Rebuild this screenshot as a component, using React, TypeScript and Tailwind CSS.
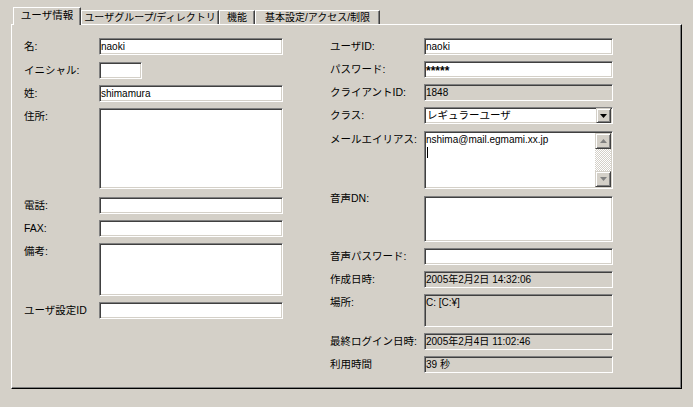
import clsx from 'clsx'
import { FC, ReactNode } from 'react'

// classic 3D borders
const sunken =
  'border border-t-[#808080] border-l-[#808080] border-b-white border-r-white shadow-[inset_1px_1px_0_#404040,inset_-1px_-1px_0_#d4d0c8]'
const raised =
  'border border-t-[#d4d0c8] border-l-[#d4d0c8] border-b-[#404040] border-r-[#404040] shadow-[inset_1px_1px_0_#ffffff,inset_-1px_-1px_0_#808080]'

interface RowProps {
  label: string
  labelClass: string
  className?: string
  labelOffset?: string
  children: ReactNode
}

const Row: FC<RowProps> = ({ label, labelClass, className, labelOffset, children }) => (
  <div className={clsx('flex', className)}>
    <div className={clsx('flex h-[17px] shrink-0 items-center whitespace-nowrap', labelClass, labelOffset)}>
      {label}
    </div>
    {children}
  </div>
)

interface BoxProps {
  className: string
  value?: string
  readOnly?: boolean
  multi?: boolean
}

const Box: FC<BoxProps> = ({ className, value, readOnly, multi }) => (
  <div
    className={clsx(
      sunken,
      className,
      'pl-px text-[10px] leading-[13px] font-["Liberation_Sans","Noto_Sans_CJK_JP",sans-serif]',
      readOnly ? 'bg-[#d4d0c8]' : 'bg-white',
      multi ? 'pt-px' : 'flex items-center'
    )}
  >
    {value}
  </div>
)

const Arrow: FC<{ dir: 'up' | 'down'; color: string }> = ({ dir, color }) => (
  <svg width="7" height="4" viewBox="0 0 7 4">
    {dir === 'up' ? <path d="M3.5 0 L7 4 L0 4 Z" fill={color} /> : <path d="M0 0 L7 0 L3.5 4 Z" fill={color} />}
  </svg>
)

const tabs = [
  { label: 'ユーザグループ/ディレクトリ', w: 'w-[138px]' },
  { label: '機能', w: 'w-[36px]' },
  { label: '基本設定/アクセス/制限', w: 'w-[125px]' },
]

export default function App() {
  const leftLabel = 'w-[75px]'
  const rightLabel = 'w-[94px]'

  return (
    <div className='h-[407px] w-[693px] overflow-hidden bg-[#d4d0c8] pt-[7px] pl-[11px] font-["Liberation_Sans","Noto_Sans_CJK_JP",sans-serif] text-[10.5px] text-black'>
      {/* tab strip */}
      <div className="flex h-[17px] items-end pl-[2px]">
        <div className="relative z-10 -mb-px flex h-[18px] w-[68px] items-center justify-center border-t border-l border-r border-t-white border-l-white border-r-[#404040] bg-[#d4d0c8] pb-[2px] shadow-[inset_-1px_0_0_#808080]">
          ユーザ情報
        </div>
        {tabs.map((t) => (
          <div
            key={t.label}
            className={clsx(
              t.w,
              'flex h-[14px] items-center justify-center whitespace-nowrap border-t border-l border-r border-t-white border-l-white border-r-[#404040] text-[10px] shadow-[inset_-1px_0_0_#808080]'
            )}
          >
            {t.label}
          </div>
        ))}
      </div>

      {/* panel */}
      <div className="flex h-[365px] w-[671px] gap-[47px] border border-t-white border-l-white border-r-black border-b-black pt-[13px] pl-[12px] shadow-[inset_-1px_-1px_0_#808080]">
        {/* left column */}
        <div className="flex w-[259px] flex-col">
          <Row label="名:" labelClass={leftLabel}>
            <Box className="h-[17px] w-[184px]" value="naoki" />
          </Row>
          <Row label="イニシャル:" labelClass={leftLabel} className="mt-[7px]">
            <Box className="h-[17px] w-[43px]" />
          </Row>
          <Row label="姓:" labelClass={leftLabel} className="mt-[6px]">
            <Box className="h-[17px] w-[184px]" value="shimamura" />
          </Row>
          <Row label="住所:" labelClass={leftLabel} className="mt-[6px]">
            <Box className="h-[81px] w-[184px]" multi />
          </Row>
          <Row label="電話:" labelClass={leftLabel} className="mt-[8px]">
            <Box className="h-[17px] w-[184px]" />
          </Row>
          <Row label="FAX:" labelClass={leftLabel} className="mt-[6px]">
            <Box className="h-[17px] w-[184px]" />
          </Row>
          <Row label="備考:" labelClass={leftLabel} className="mt-[6px]">
            <Box className="h-[53px] w-[184px]" multi />
          </Row>
          <Row label="ユーザ設定ID" labelClass={leftLabel} className="mt-[6px]">
            <Box className="h-[17px] w-[184px]" />
          </Row>
        </div>

        {/* right column */}
        <div className="flex w-[283px] flex-col">
          <Row label="ユーザID:" labelClass={rightLabel}>
            <Box className="h-[17px] w-[189px]" value="naoki" />
          </Row>
          <Row label="パスワード:" labelClass={rightLabel} className="mt-[6px]">
            <div className={clsx(sunken, 'flex h-[17px] w-[189px] items-center bg-white pl-px pt-[3px] text-[12px] font-bold')}>
              *****
            </div>
          </Row>
          <Row label="クライアントID:" labelClass={rightLabel} className="mt-[6px]">
            <Box className="h-[17px] w-[189px]" value="1848" readOnly />
          </Row>
          <Row label="クラス:" labelClass={rightLabel} className="mt-[6px]">
            <div className={clsx(sunken, 'flex h-[17px] w-[189px] items-center bg-white pl-[2px] pr-px text-[10.5px]')}>
              <span className="flex-1">レギュラーユーザ</span>
              <div className={clsx(raised, 'flex h-[15px] w-[15px] items-center justify-center bg-[#d4d0c8]')}>
                <Arrow dir="down" color="#000000" />
              </div>
            </div>
          </Row>
          <Row label="メールエイリアス:" labelClass={rightLabel} className="mt-[7px]">
            <div className={clsx(sunken, 'flex h-[58px] w-[189px] bg-white p-px')}>
              <div className="flex-1 pt-px text-[10px] leading-[12px]">
                <div>nshima@mail.egmami.xx.jp</div>
                <div className="ml-px mt-px h-[11px] w-px bg-black" />
              </div>
              <div className="flex w-[16px] flex-col">
                <div className={clsx(raised, 'flex h-[16px] items-center justify-center bg-[#d4d0c8]')}>
                  <Arrow dir="up" color="#808080" />
                </div>
                <div className="flex-1 bg-[image:repeating-conic-gradient(#d4d0c8_0%_25%,#ffffff_0%_50%)] bg-size-[2px_2px]" />
                <div className={clsx(raised, 'flex h-[16px] items-center justify-center bg-[#d4d0c8]')}>
                  <Arrow dir="down" color="#808080" />
                </div>
              </div>
            </div>
          </Row>
          <Row label="音声DN:" labelClass={rightLabel} labelOffset="-mt-[6px]" className="mt-[7px]">
            <Box className="h-[46px] w-[189px]" multi />
          </Row>
          <Row label="音声パスワード:" labelClass={rightLabel} className="mt-[6px]">
            <Box className="h-[17px] w-[189px]" />
          </Row>
          <Row label="作成日時:" labelClass={rightLabel} className="mt-[6px]">
            <Box className="h-[17px] w-[189px]" value="2005年2月2日 14:32:06" readOnly />
          </Row>
          <Row label="場所:" labelClass={rightLabel} className="mt-[6px]">
            <Box className="h-[33px] w-[189px]" value="C: [C:¥]" readOnly multi />
          </Row>
          <Row label="最終ログイン日時:" labelClass={rightLabel} className="mt-[6px]">
            <Box className="h-[17px] w-[189px]" value="2005年2月4日 11:02:46" readOnly />
          </Row>
          <Row label="利用時間" labelClass={rightLabel} className="mt-[6px]">
            <Box className="h-[17px] w-[189px]" value="39 秒" readOnly />
          </Row>
        </div>
      </div>
    </div>
  )
}
